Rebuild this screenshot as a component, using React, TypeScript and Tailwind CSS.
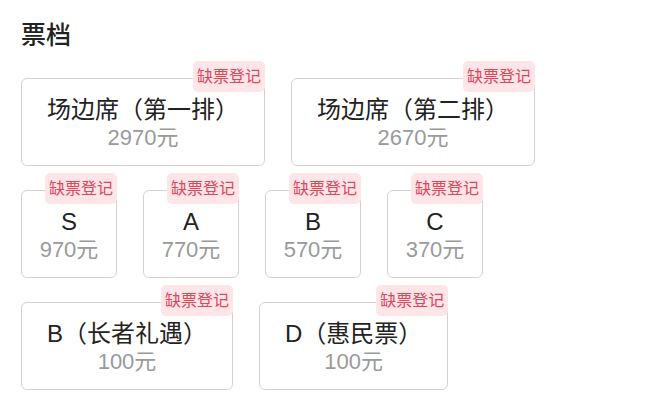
const tiers = [
  { name: '场边席（第一排）', price: '2970元' },
  { name: '场边席（第二排）', price: '2670元' },
  { name: 'S', price: '970元', fixed: true },
  { name: 'A', price: '770元', fixed: true },
  { name: 'B', price: '570元', fixed: true },
  { name: 'C', price: '370元', fixed: true },
  { name: 'B（长者礼遇）', price: '100元' },
  { name: 'D（惠民票）', price: '100元' },
];

function TierCard({ name, price, fixed }: { name: string; price: string; fixed?: boolean }) {
  return (
    <div className="relative pt-[17px]">
      <div
        className={
          'h-[88px] rounded-[6px] border border-[#d2d2d2] bg-white py-4 flex flex-col items-center ' +
          (fixed ? 'w-[96px]' : 'px-[25px]')
        }
      >
        <div className="text-[24px] leading-[30px] text-[#222] whitespace-nowrap">{name}</div>
        <div className="text-[22px] leading-[26px] text-[#9a9a9a] whitespace-nowrap">{price}</div>
      </div>
      <span className="absolute top-0 right-0 h-[31px] px-[4px] rounded-[5px] bg-[#fde5e8] text-[16px] leading-[31px] text-[#e0465a] whitespace-nowrap">
        缺票登记
      </span>
    </div>
  );
}

export default function App() {
  return (
    <div
      className="w-[646px] h-[404px] bg-white overflow-hidden pl-[21px] pt-[20px]"
      style={{ fontFamily: '"Liberation Sans", "Noto Sans CJK SC", sans-serif' }}
    >
      <h2 className="text-[25px] leading-[30px] font-medium text-[#222] mb-[11px]">票档</h2>
      <div className="flex flex-wrap gap-x-[26px] gap-y-[7px] w-[600px]">
        {tiers.map((t, i) => (
          <TierCard key={i} name={t.name} price={t.price} fixed={t.fixed} />
        ))}
      </div>
    </div>
  );
}
